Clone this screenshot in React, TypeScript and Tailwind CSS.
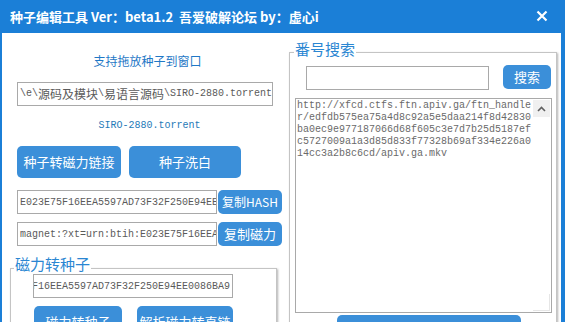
import React from "react";

const CJK = '"Noto Sans CJK SC", "Noto Sans", sans-serif';
const MONO = '"Liberation Mono", "Noto Sans CJK SC", monospace';

function Mixed({ text }: { text: string }) {
  const parts = text.match(/[\x00-\x7f]+|[^\x00-\x7f]+/g) || [];
  return (
    <>
      {parts.map((p, i) =>
        /^[\x00-\x7f]+$/.test(p) ? (
          <span key={i} className="text-[10px]" style={{ fontFamily: MONO }}>
            {p}
          </span>
        ) : (
          <span key={i} className="text-[12px]" style={{ fontFamily: '"Noto Sans CJK SC", sans-serif' }}>
            {p}
          </span>
        )
      )}
    </>
  );
}

function Btn({ children, className = "" }: { children: React.ReactNode; className?: string }) {
  return (
    <div
      className={`flex items-center justify-center whitespace-nowrap rounded-[5px] bg-[#3b8fd9] text-white ${className}`}
      style={{ fontFamily: CJK }}
    >
      {children}
    </div>
  );
}

function Field({ children, className = "" }: { children?: React.ReactNode; className?: string }) {
  return (
    <div
      className={`flex items-center overflow-hidden whitespace-nowrap border border-[#a9a9a9] bg-white px-[2px] text-[#5a5a5a] ${className}`}
    >
      {children}
    </div>
  );
}

const lines = [
  "http://xfcd.ctfs.ftn.apiv.ga/ftn_handle",
  "r/edfdb575ea75a4d8c92a5e5daa214f8d42830",
  "ba0ec9e977187066d68f605c3e7d7b25d5187ef",
  "c5727009a1a3d85d833f77328b69af334e226a0",
  "14cc3a2b8c6cd/apiv.ga.mkv",
];

export default function App() {
  return (
    <div className="flex h-[322px] w-[565px] flex-col overflow-hidden bg-white">
      {/* title bar */}
      <div className="flex h-[33px] shrink-0 items-center justify-between bg-[#1b7fd7] pl-[10px] pr-[17px] text-white">
        <div className="text-[13px] font-bold" style={{ fontFamily: CJK }}>
          种子编辑工具 Ver：beta1.2&nbsp; 吾爱破解论坛 by：虚心i
        </div>
        <svg width="12" height="12" viewBox="0 0 12 12" className="mb-[1px]">
          <path d="M1.5 1.5 L10.5 10.5 M10.5 1.5 L1.5 10.5" stroke="white" strokeWidth="2.2" />
        </svg>
      </div>

      {/* body */}
      <div className="flex flex-1 border-l-2 border-r-4 border-[#1b7fd7]">
        {/* left column */}
        <div className="flex w-[285px] shrink-0 flex-col">
          <div
            className="mt-[20px] ml-[6px] h-[16px] text-center text-[12px] leading-[16px] text-[#1f78c6]"
            style={{ fontFamily: CJK }}
          >
            支持拖放种子到窗口
          </div>
          <Field className="ml-[15px] mt-[13px] h-[24px] w-[256px] leading-[22px]">
            <Mixed text={"\\e\\源码及模块\\易语言源码\\SIRO-2880.torrent"} />
          </Field>
          <div
            className="ml-[10px] mt-[12px] h-[16px] text-center text-[10px] leading-[16px] text-[#1f7ab8]"
            style={{ fontFamily: MONO }}
          >
            SIRO-2880.torrent
          </div>
          <div className="ml-[15px] mt-[12px] flex gap-[8px]">
            <Btn className="h-[32px] w-[104px] text-[13px]">种子转磁力链接</Btn>
            <Btn className="h-[32px] w-[112px] text-[13px]">种子洗白</Btn>
          </div>
          <div className="ml-[15px] mt-[12px] flex gap-[1px]">
            <Field className="h-[24px] w-[200px] text-[10px]">
              <span style={{ fontFamily: MONO }}>E023E75F16EEA5597AD73F32F250E94EE0086BA9</span>
            </Field>
            <Btn className="h-[24px] w-[64px] text-[12px]">复制HASH</Btn>
          </div>
          <div className="ml-[15px] mt-[8px] flex gap-[1px]">
            <Field className="h-[24px] w-[200px] text-[10px]">
              <span style={{ fontFamily: MONO }}>magnet:?xt=urn:btih:E023E75F16EEA5597AD73F32F250E94EE0086BA9</span>
            </Field>
            <Btn className="h-[24px] w-[64px] text-[13px]">复制磁力</Btn>
          </div>

          {/* group: 磁力转种子 */}
          <div className="relative ml-[8px] mt-[22px] flex w-[267px] flex-1 flex-col border border-[#c4c4c4] shadow-[1px_1px_2px_rgba(0,0,0,0.3)]">
            <div
              className="absolute left-[3px] top-[-15px] bg-white px-[1px] text-[15px] leading-[20px] text-[#2a86d2]"
              style={{ fontFamily: CJK }}
            >
              磁力转种子
            </div>
            <Field className="ml-[22px] mt-[5px] h-[24px] w-[200px] justify-end text-[10px]">
              <span style={{ fontFamily: MONO }}>E023E75F16EEA5597AD73F32F250E94EE0086BA9</span>
            </Field>
            <div className="ml-[23px] mt-[8px] flex gap-[15px]">
              <Btn className="h-[32px] w-[88px] text-[13px]">磁力转种子</Btn>
              <Btn className="h-[32px] w-[96px] text-[13px]">解析磁力转直链</Btn>
            </div>
          </div>
        </div>

        {/* right column */}
        <div className="relative ml-[2px] mt-[19px] flex w-[268px] flex-col border border-[#c4c4c4] shadow-[1px_1px_2px_rgba(0,0,0,0.3)]">
          <div
            className="absolute left-[4px] top-[-14px] bg-white px-[1px] text-[15px] leading-[20px] text-[#2a86d2]"
            style={{ fontFamily: CJK }}
          >
            番号搜索
          </div>
          <div className="ml-[16px] mt-[12px] flex items-start gap-[14px]">
            <Field className="mt-[1px] h-[24px] w-[183px]" />
            <Btn className="h-[24px] w-[48px] text-[13px]">搜索</Btn>
          </div>
          <div className="relative ml-[5px] mt-[8px] h-[215px] w-[257px] border border-[#a9a9a9] bg-white pl-[1px] pt-[1px] text-[10px] leading-[12px] text-[#6a6a6a]">
            <div className="whitespace-pre" style={{ fontFamily: MONO }}>
              {lines.map((l, i) => (
                <div key={i}>{l}</div>
              ))}
            </div>
            <div className="absolute right-[1px] top-[1px] flex h-[17px] w-[17px] items-center justify-center bg-[#f0f0f0]">
              <svg width="9" height="6" viewBox="0 0 9 6">
                <path d="M1 5 L4.5 1.5 L8 5" stroke="#606060" strokeWidth="1.6" fill="none" />
              </svg>
            </div>
            <div className="absolute bottom-[1px] right-[1px] h-[17px] w-[17px] border-b border-r border-[#e6e6e6]" />
          </div>
          <div className="ml-[47px] mt-[2px]">
            <Btn className="h-[32px] w-[184px] text-[13px]">搜索</Btn>
          </div>
        </div>
      </div>
    </div>
  );
}
